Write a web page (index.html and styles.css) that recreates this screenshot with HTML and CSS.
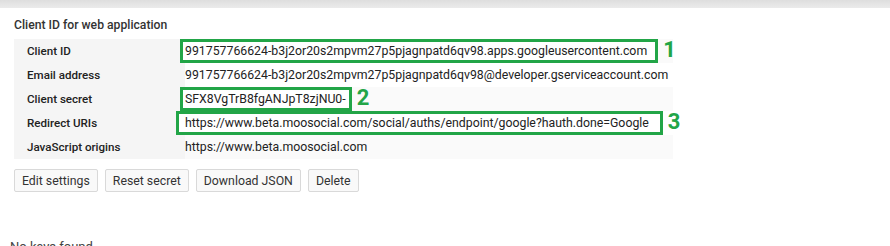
FILE: index.html
```html
<!DOCTYPE html>
<html lang="en">
<head>
  <meta charset="UTF-8">
  <title>Client ID for web application</title>
  <link rel="stylesheet" href="styles.css">
</head>
<body>
  <div class="topbar"></div>
  <div class="page">
    <h2 class="title">Client ID for web application</h2>
    <table class="creds">
      <colgroup>
        <col class="col-label">
        <col class="col-value">
      </colgroup>
      <tr class="shade">
        <th>Client ID</th>
        <td><span class="mark id">991757766624-b3j2or20s2mpvm27p5pjagnpatd6qv98.apps.googleusercontent.com</span><span class="num">1</span></td>
      </tr>
      <tr>
        <th>Email address</th>
        <td>991757766624-b3j2or20s2mpvm27p5pjagnpatd6qv98@developer.gserviceaccount.com</td>
      </tr>
      <tr class="shade">
        <th>Client secret</th>
        <td><span class="mark">SFX8VgTrB8fgANJpT8zjNU0-</span><span class="num">2</span></td>
      </tr>
      <tr>
        <th>Redirect URIs</th>
        <td><span class="mark uri">https://www.beta.moosocial.com/social/auths/endpoint/google?hauth.done=Google</span><span class="num">3</span></td>
      </tr>
      <tr class="shade">
        <th>JavaScript origins</th>
        <td>https://www.beta.moosocial.com</td>
      </tr>
    </table>

    <div class="actions">
      <button>Edit settings</button>
      <button>Reset secret</button>
      <button>Download JSON</button>
      <button>Delete</button>
    </div>

    <p class="notes">No keys found</p>
  </div>
</body>
</html>
```

FILE: styles.css
```css
body {
  margin: 0;
  font-family: Roboto, "Liberation Sans", Arial, sans-serif;
  color: #222;
  background: #fff;
  overflow: hidden;
}
.topbar {
  height: 8px;
  background: linear-gradient(#dedede, #ebebeb);
}
.page {
  padding: 0 14px;
}
.title {
  margin: 9px 0 6px;
  font-size: 12.2px;
  font-weight: 500;
  color: #333;
  line-height: 16px;
}
.creds {
  border-collapse: collapse;
  table-layout: fixed;
  width: 659px;
}
.col-label {
  width: 171px;
}
.creds tr {
  height: 24px;
}
.creds th {
  text-align: left;
  font-size: 11.6px;
  font-weight: 500;
  color: #222;
  padding: 0 0 0 13px;
  white-space: nowrap;
  background: #f5f5f5;
}
.creds td {
  font-size: 12.3px;
  padding: 0;
  white-space: nowrap;
  background: #fff;
}
.creds tr.shade td {
  background: #fafafa;
}
.mark {
  display: inline-block;
  border: 3px solid #22a547;
  padding: 1px 3px 1px 2px;
  margin-left: -5px;
  line-height: 16px;
  background: #fff;
}
.mark.id {
  padding-right: 8px;
}
.mark.uri {
  margin-left: -9px;
  padding-left: 6px;
  padding-right: 11px;
}
.num {
  display: inline-block;
  color: #22a547;
  font-size: 22px;
  font-weight: 700;
  margin-left: 5px;
  line-height: 20px;
  vertical-align: -2px;
}
.actions {
  display: flex;
  gap: 7px;
  margin-top: 10px;
}
.actions button {
  font-family: Roboto, "Liberation Sans", Arial, sans-serif;
  font-size: 12.3px;
  color: #333;
  background: #f9f9f9;
  border: 1px solid #d9d9d9;
  border-radius: 2px;
  height: 23px;
  padding: 0 7px;
}
.notes {
  margin: 47px 0 0 -4px;
  font-size: 13px;
  color: #444;
}
```
